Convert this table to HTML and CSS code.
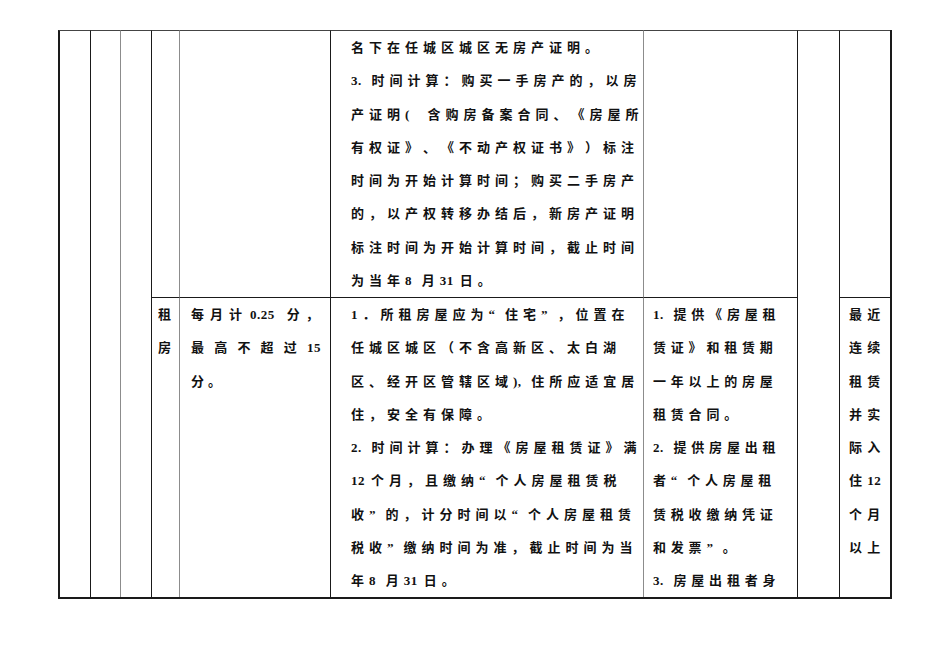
FILE: index.html
```html
<!DOCTYPE html>
<html lang="zh-CN">
<head>
<meta charset="utf-8">
<title>表格</title>
<link rel="stylesheet" href="styles.css">
</head>
<body>
<div class="page">
  <div class="tbl">
    <div class="c first top span2"></div>
    <div class="c top span2"></div>
    <div class="c g top span2"></div>
    <div class="c top k4"></div>
    <div class="c g top k5"></div>
    <div class="c top k6">
      <div class="ln">名下在任城区城区无房产证明。</div>
      <div class="ln"><span class="n">3. </span>时间计算：购买一手房产的，以房</div>
      <div class="ln">产证明<span class="q">( </span>含购房备案合同、《房屋所</div>
      <div class="ln">有权证》、《不动产权证书》）标注</div>
      <div class="ln">时间为开始计算时间；购买二手房产</div>
      <div class="ln">的，以产权转移办结后，新房产证明</div>
      <div class="ln">标注时间为开始计算时间，截止时间</div>
      <div class="ln">为当年<span class="n">8 </span>月<span class="n">31</span>日。</div>
    </div>
    <div class="c g top k7"></div>
    <div class="c top span2"></div>
    <div class="c top k9"></div>

    <div class="c k4">
      <div class="ln">租</div>
      <div class="ln">房</div>
    </div>
    <div class="c g k5">
      <div class="ln s1">每月计<span class="n wide">0.25</span>分，</div>
      <div class="ln s2">最高不超过<span class="n">15</span></div>
      <div class="ln">分。</div>
    </div>
    <div class="c k6">
      <div class="ln">1．所租房屋应为<span class="q">“</span>住宅<span class="q">”</span>，位置在</div>
      <div class="ln">任城区城区（不含高新区、太白湖</div>
      <div class="ln">区、经开区管辖区域<span class="n">), </span>住所应适宜居</div>
      <div class="ln">住，安全有保障。</div>
      <div class="ln"><span class="n">2. </span>时间计算：办理《房屋租赁证》满</div>
      <div class="ln"><span class="n">12</span>个月，且缴纳<span class="q">“</span>个人房屋租赁税</div>
      <div class="ln">收<span class="q">”</span>的，计分时间以<span class="q">“</span>个人房屋租赁</div>
      <div class="ln">税收<span class="q">”</span>缴纳时间为准，截止时间为当</div>
      <div class="ln">年<span class="n">8 </span>月<span class="n">31</span>日。</div>
    </div>
    <div class="c g k7">
      <div class="ln"><span class="n">1. </span>提供《房屋租</div>
      <div class="ln">赁证》和租赁期</div>
      <div class="ln">一年以上的房屋</div>
      <div class="ln">租赁合同。</div>
      <div class="ln"><span class="n">2. </span>提供房屋出租</div>
      <div class="ln">者<span class="q">“</span>个人房屋租</div>
      <div class="ln">赁税收缴纳凭证</div>
      <div class="ln">和发票<span class="q">”</span>。</div>
      <div class="ln"><span class="n">3. </span>房屋出租者身</div>
    </div>
    <div class="c k9">
      <div class="ln">最近</div>
      <div class="ln">连续</div>
      <div class="ln">租赁</div>
      <div class="ln">并实</div>
      <div class="ln">际入</div>
      <div class="ln">住<span class="n">12</span></div>
      <div class="ln">个月</div>
      <div class="ln">以上</div>
    </div>
  </div>
</div>
</body>
</html>
```

FILE: styles.css
```css
html, body {
  margin: 0;
  padding: 0;
  background: #ffffff;
}

body {
  font-family: "Liberation Serif", "Noto Sans CJK SC", serif;
  font-weight: 700;
  font-size: 13px;
  line-height: 33.3px;
  color: #111111;
  text-spacing-trim: space-all;
}

.page {
  padding: 30px 0 0 58px;
}

.tbl {
  display: grid;
  grid-template-columns: 32px 30px 31px 28px 151px 313px 154px 42px 51px;
  grid-template-rows: 267px 300px;
  width: max-content;
  border-right: 2px solid #1a1a1a;
  border-bottom: 2px solid #1a1a1a;
}

.c {
  box-sizing: border-box;
  border-left: 1px solid #1a1a1a;
  border-top: 1px solid #1a1a1a;
  white-space: nowrap;
  overflow: visible;
}

.top {
  border-top-color: #444444;
}

.first {
  border-left: 2px solid #1a1a1a;
}

.g {
  border-left-color: #8c8c8c;
}

.span2 {
  grid-row: span 2;
}

.ln {
  display: block;
}

.k4 {
  padding-left: 6px;
}

.k5 {
  padding-left: 11px;
  letter-spacing: 4px;
}

.k5 .s1 {
  letter-spacing: 6px;
}

.k5 .s2 {
  letter-spacing: 10.2px;
}

.k6 {
  padding-left: 20px;
  letter-spacing: 5px;
}

.k7 {
  padding-left: 9px;
  letter-spacing: 4.8px;
}

.k9 {
  padding-left: 9px;
  letter-spacing: 5.3px;
}

.n {
  letter-spacing: 0.5px;
  margin-right: 6px;
}

.k5 .s2 .n {
  margin-right: 0;
}

.k5 .s1 .wide {
  margin-left: 2px;
  margin-right: 12px;
}

.q {
  margin-right: 5px;
}
```
